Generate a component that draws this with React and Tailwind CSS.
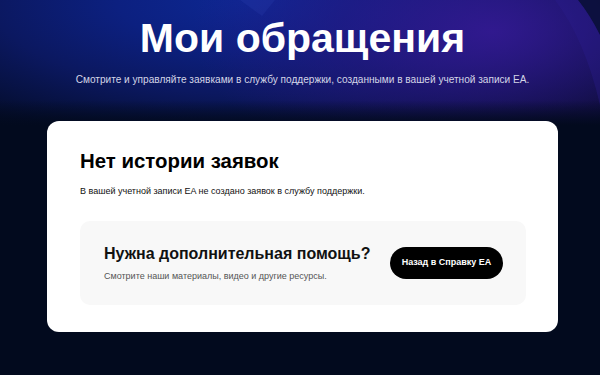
export default function App() {
  return (
    <div className="relative w-[600px] h-[375px] overflow-hidden bg-[#020a1e]" style={{ fontFamily: '"Liberation Sans", Arial, sans-serif' }}>
      <div className="absolute inset-x-0 top-0 h-[125px] bg-[radial-gradient(ellipse_75%_130%_at_42%_0%,#0d2894_0%,#0c2080_30%,#0b1860_58%,#020a1e_100%)]" />
      <div className="absolute inset-x-0 top-0 h-[125px] bg-[radial-gradient(ellipse_50%_120%_at_82%_25%,rgba(55,25,150,0.85)_0%,rgba(45,22,135,0.5)_50%,rgba(0,0,0,0)_100%)]" />
      <div className="absolute inset-x-0 top-[100px] h-[25px] bg-gradient-to-b from-transparent to-[#020a1e]" />
      <svg className="absolute left-0 top-0" width="600" height="130" viewBox="0 0 600 130">
        <path d="M578,0 Q590,15 600,35 L600,0 Z" fill="#0a0f3a" opacity="0.9" />
        <path d="M555,0 L578,0 Q590,15 600,35 L600,105 Q585,40 555,0 Z" fill="#2c1d8f" opacity="0.35" />
        <polygon points="240,0 275,0 262,16" fill="#2a3fb0" opacity="0.25" />
      </svg>
      <div className="relative flex flex-col items-center pl-[5px]">
        <h1 className="mt-[14px] text-[41px] leading-[48px] font-bold text-white">Мои обращения</h1>
        <p className="mt-[11px] text-[10.1px] leading-[14px] text-[#d3d5e6]">Смотрите и управляйте заявками в службу поддержки, созданными в вашей учетной записи EA.</p>
        <div className="mt-[34px] w-[511px] h-[211px] rounded-[12px] bg-white pl-[33px] pr-[32px] pt-[27px]">
          <h2 className="text-[20.4px] leading-[26px] font-bold text-black">Нет истории заявок</h2>
          <p className="mt-[11px] text-[9px] leading-[12px] text-[#111]">В вашей учетной записи EA не создано заявок в службу поддержки.</p>
          <div className="mt-[24px] h-[84px] rounded-[10px] bg-[#f8f8f8] flex items-center justify-between pl-[24px] pr-[23px]">
            <div className="flex flex-col">
              <h3 className="text-[16px] leading-[20px] font-bold text-[#111]">Нужна дополнительная помощь?</h3>
              <p className="mt-[6px] text-[9px] leading-[12px] text-[#555]">Смотрите наши материалы, видео и другие ресурсы.</p>
            </div>
            <button className="h-[32px] w-[113px] rounded-full bg-black text-white text-[9px] font-bold">Назад в Справку EA</button>
          </div>
        </div>
      </div>
    </div>
  );
}
